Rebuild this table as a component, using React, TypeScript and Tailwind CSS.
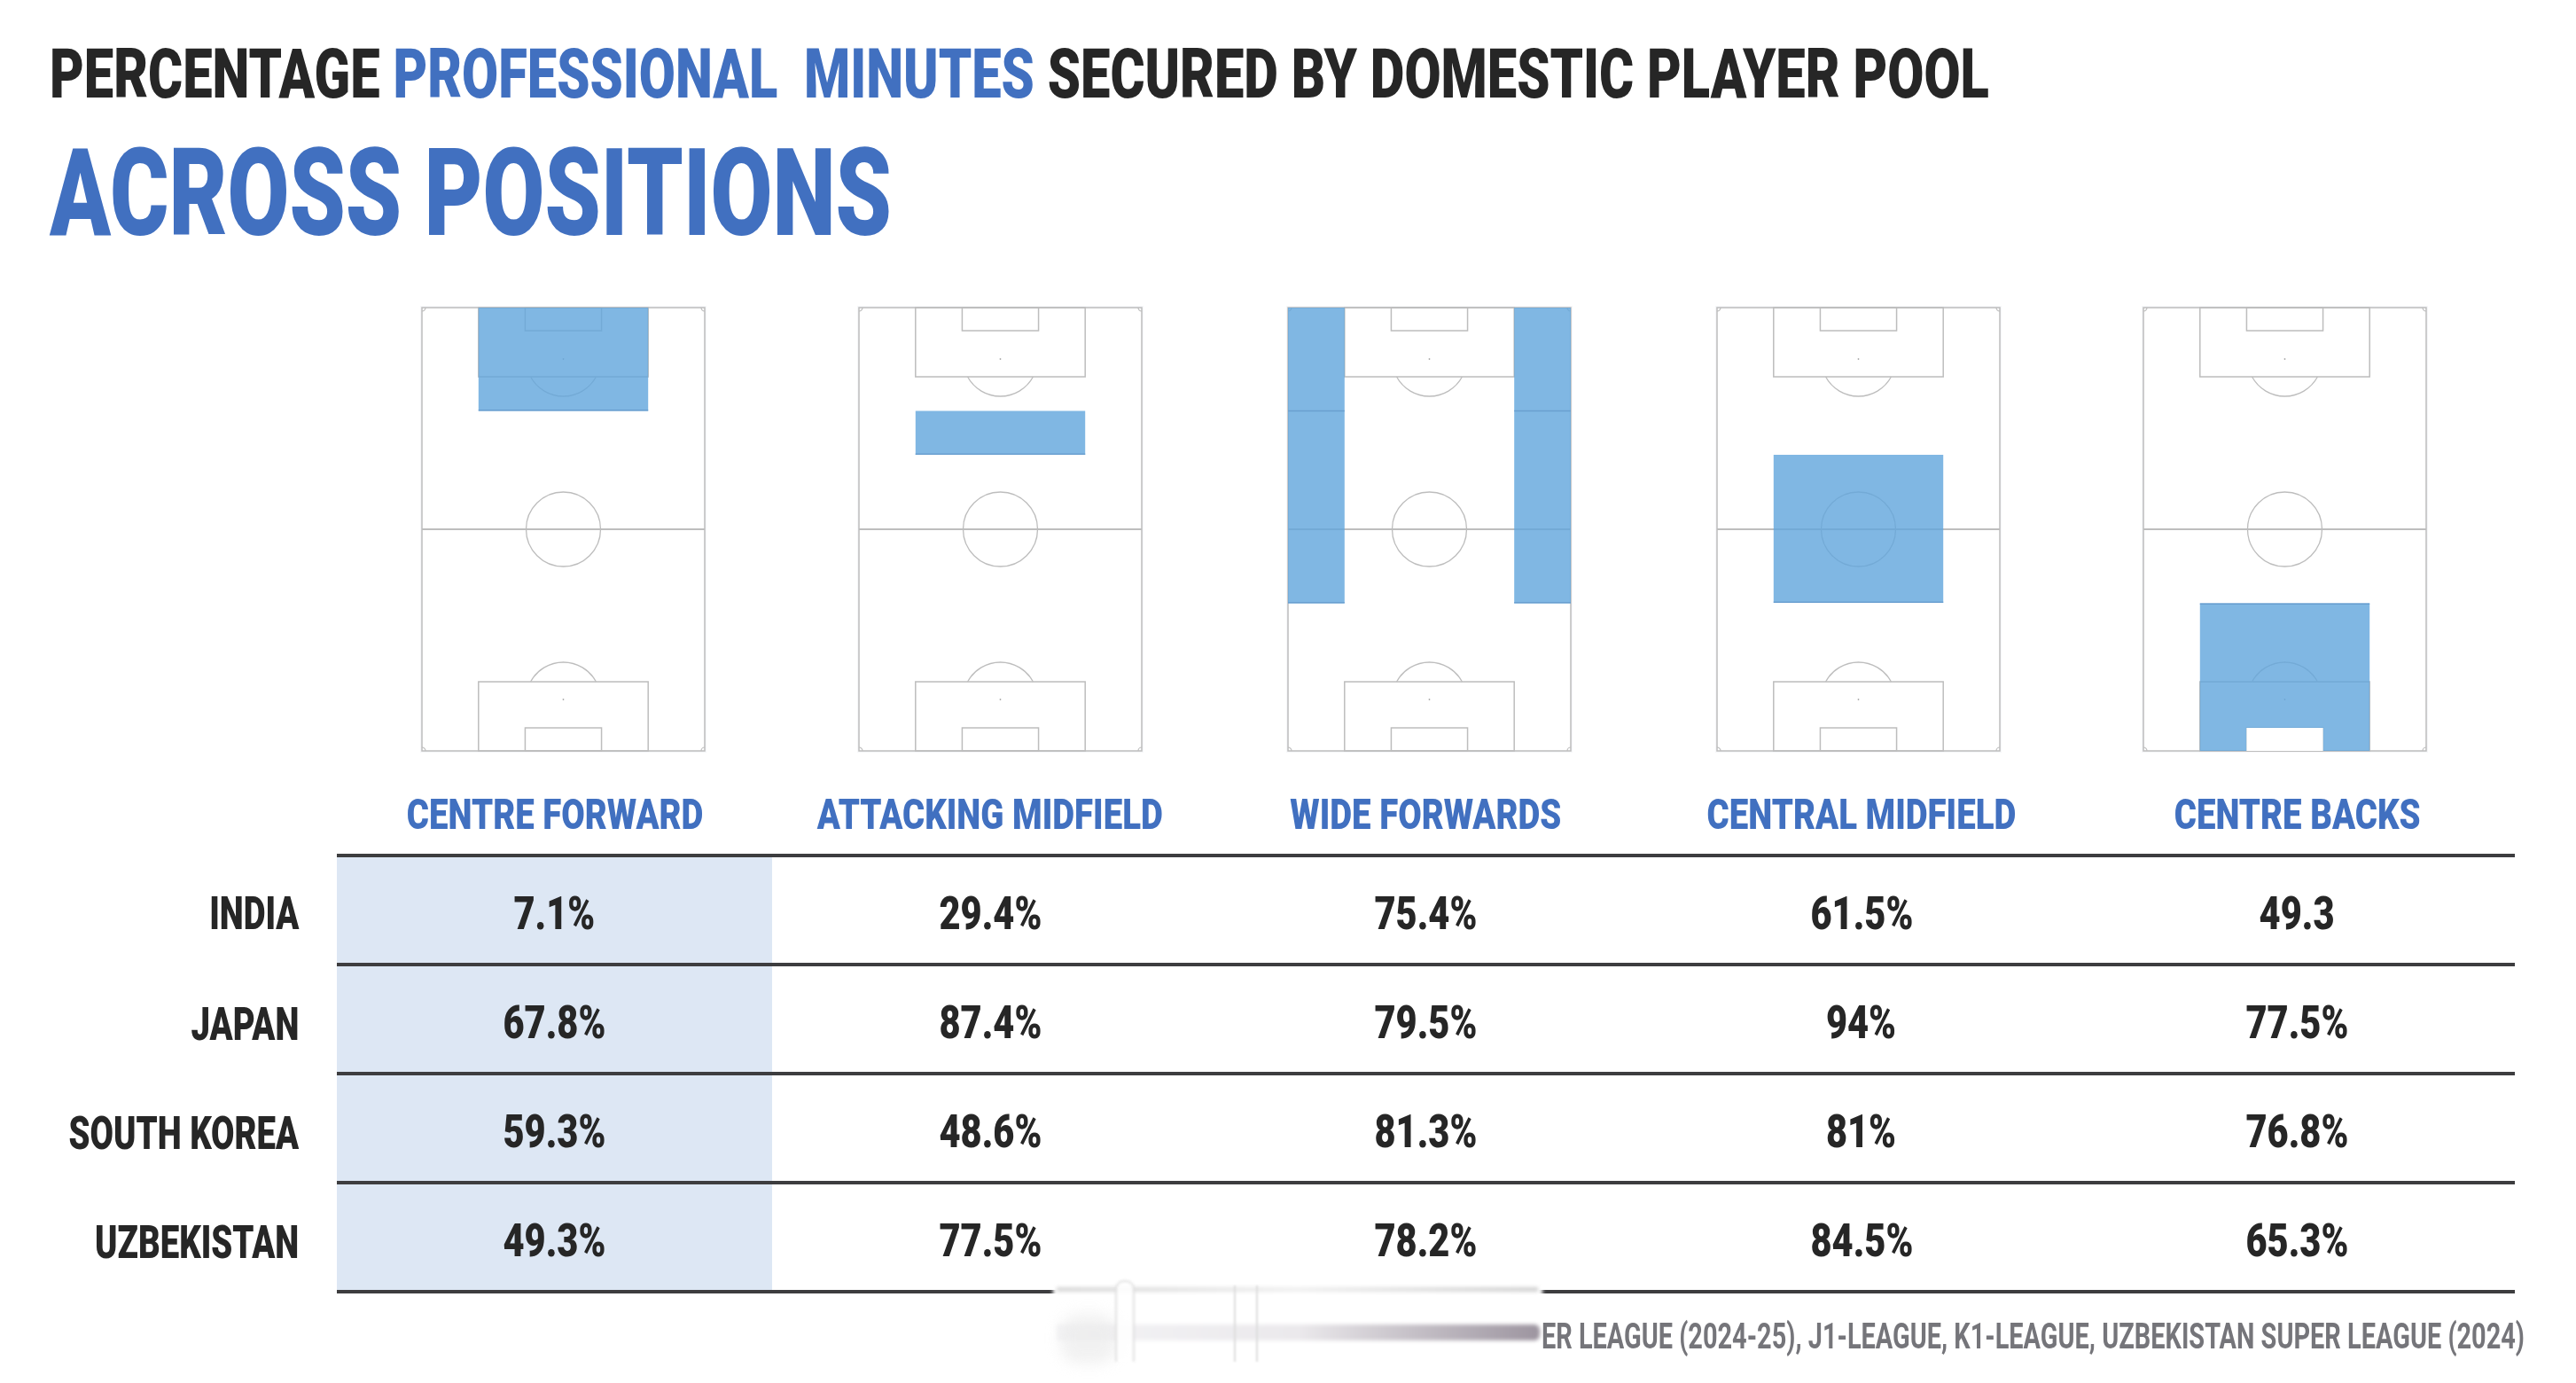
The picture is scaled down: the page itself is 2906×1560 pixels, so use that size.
import React from "react";

type Kind = "cf" | "am" | "wf" | "cm" | "cb";

const X0 = 2;
const Y0 = 2;
const W = 319;
const H = 500;
const LINE = "#bdbdbd";
const BLUE = "#60a5dc";

function Pitch({ kind }: { kind: Kind }) {
  const cx = X0 + W / 2;
  const paL = X0 + 0.2 * W;
  const paR = X0 + 0.8 * W;
  const gaL = X0 + 0.365 * W;
  const gaR = X0 + 0.635 * W;
  const paH = 78;
  const gaH = 26;
  const spot = 58;
  const r = 42;
  const dx = Math.sqrt(r * r - (paH - spot) * (paH - spot));
  const yb = Y0 + H;
  const y = (f: number) => Y0 + f * H;
  const blocks: { x: number; y: number; w: number; h: number }[] = [];
  if (kind === "cf") blocks.push({ x: paL, y: y(0), w: paR - paL, h: y(0.233) - y(0) });
  if (kind === "am") blocks.push({ x: paL, y: y(0.233), w: paR - paL, h: y(0.332) - y(0.233) });
  if (kind === "cm") blocks.push({ x: paL, y: y(0.332), w: paR - paL, h: y(0.666) - y(0.332) });
  if (kind === "wf") {
    blocks.push({ x: X0, y: y(0), w: 0.2 * W, h: y(0.667) - y(0) });
    blocks.push({ x: paR, y: y(0), w: 0.2 * W, h: y(0.667) - y(0) });
  }
  return (
    <svg width={323} height={504} viewBox="0 0 323 504" className="block shrink-0">
      <rect x={0} y={0} width={323} height={504} fill="#f6f7f9" />
      <rect x={X0} y={Y0} width={W} height={H} fill="#ffffff" stroke={LINE} strokeWidth={1.5} />
      <line x1={X0} y1={Y0 + H / 2} x2={X0 + W} y2={Y0 + H / 2} stroke={LINE} strokeWidth={2} />
      <circle cx={cx} cy={Y0 + H / 2} r={r} fill="none" stroke={LINE} strokeWidth={1.3} />
      <rect x={paL} y={Y0} width={paR - paL} height={paH} fill="none" stroke={LINE} strokeWidth={1.5} />
      <rect x={gaL} y={Y0} width={gaR - gaL} height={gaH} fill="none" stroke={LINE} strokeWidth={1.5} />
      <circle cx={cx} cy={Y0 + spot} r={0.9} fill="#aaaaaa" />
      <path
        d={`M ${cx - dx} ${Y0 + paH} A ${r} ${r} 0 0 0 ${cx + dx} ${Y0 + paH}`}
        fill="none"
        stroke={LINE}
        strokeWidth={1.3}
      />
      <rect x={paL} y={yb - paH} width={paR - paL} height={paH} fill="none" stroke={LINE} strokeWidth={1.5} />
      <rect x={gaL} y={yb - gaH} width={gaR - gaL} height={gaH} fill="none" stroke={LINE} strokeWidth={1.5} />
      <circle cx={cx} cy={yb - spot} r={0.9} fill="#aaaaaa" />
      <path
        d={`M ${cx - dx} ${yb - paH} A ${r} ${r} 0 0 1 ${cx + dx} ${yb - paH}`}
        fill="none"
        stroke={LINE}
        strokeWidth={1.3}
      />
      <path d={`M ${X0 + 4} ${Y0} A 4 4 0 0 1 ${X0} ${Y0 + 4}`} fill="none" stroke={LINE} strokeWidth={1.2} />
      <path d={`M ${X0 + W - 4} ${Y0} A 4 4 0 0 0 ${X0 + W} ${Y0 + 4}`} fill="none" stroke={LINE} strokeWidth={1.2} />
      <path d={`M ${X0} ${yb - 4} A 4 4 0 0 1 ${X0 + 4} ${yb}`} fill="none" stroke={LINE} strokeWidth={1.2} />
      <path d={`M ${X0 + W} ${yb - 4} A 4 4 0 0 0 ${X0 + W - 4} ${yb}`} fill="none" stroke={LINE} strokeWidth={1.2} />

      {blocks.map((b, i) => (
        <g key={i}>
          <rect x={b.x} y={b.y} width={b.w} height={b.h} fill={BLUE} fillOpacity={0.8} />
          <line x1={b.x} y1={b.y + b.h - 0.8} x2={b.x + b.w} y2={b.y + b.h - 0.8} stroke="#6a9fd0" strokeWidth={1.6} />
        </g>
      ))}
      {kind === "wf" && (
        <>
          <line x1={X0} y1={y(0.233)} x2={X0 + 0.2 * W} y2={y(0.233)} stroke="#6a9fd0" strokeWidth={1.6} />
          <line x1={paR} y1={y(0.233)} x2={X0 + W} y2={y(0.233)} stroke="#6a9fd0" strokeWidth={1.6} />
        </>
      )}
      {kind === "cb" && (
        <>
          <path
            d={`M ${paL} ${y(0.667)} H ${paR} V ${yb} H ${gaR} V ${yb - gaH} H ${gaL} V ${yb} H ${paL} Z`}
            fill={BLUE}
            fillOpacity={0.8}
          />
          <rect x={gaL} y={yb - gaH} width={gaR - gaL} height={gaH} fill="#ffffff" />
          <line x1={paL} y1={y(0.667) + 0.8} x2={paR} y2={y(0.667) + 0.8} stroke="#6a9fd0" strokeWidth={1.6} />
        </>
      )}
    </svg>
  );
}

const positions: { label: string; kind: Kind; gap: string }[] = [
  { label: "CENTRE FORWARD", kind: "cf", gap: "ml-[474px]" },
  { label: "ATTACKING MIDFIELD", kind: "am", gap: "ml-[170px]" },
  { label: "WIDE FORWARDS", kind: "wf", gap: "ml-[161px]" },
  { label: "CENTRAL MIDFIELD", kind: "cm", gap: "ml-[161px]" },
  { label: "CENTRE BACKS", kind: "cb", gap: "ml-[158px]" },
];

const rows: { country: string; values: string[] }[] = [
  { country: "INDIA", values: ["7.1%", "29.4%", "75.4%", "61.5%", "49.3"] },
  { country: "JAPAN", values: ["67.8%", "87.4%", "79.5%", "94%", "77.5%"] },
  { country: "SOUTH KOREA", values: ["59.3%", "48.6%", "81.3%", "81%", "76.8%"] },
  { country: "UZBEKISTAN", values: ["49.3%", "77.5%", "78.2%", "84.5%", "65.3%"] },
];

export default function App() {
  return (
    <div className="relative w-[2906px] h-[1560px] overflow-hidden bg-white text-[#262626] font-['Roboto','Liberation_Sans',sans-serif]">
      {/* Title */}
      <div className="pl-[56px] pt-[46px]">
        <div className="text-[77px] leading-none font-black whitespace-pre">
          <span className="inline-block origin-left scale-x-[0.774]">
            PERCENTAGE <span className="text-[#4170c0]">PROFESSIONAL  MINUTES</span> SECURED BY DOMESTIC PLAYER POOL
          </span>
        </div>
        <div className="mt-[26px] text-[138px] leading-none font-black text-[#4170c0] whitespace-pre">
          <span className="inline-block origin-left scale-x-[0.734]">ACROSS POSITIONS</span>
        </div>
      </div>

      {/* Pitches */}
      <div className="mt-[58px] flex">
        {positions.map((p) => (
          <div key={p.kind} className={p.gap}>
            <Pitch kind={p.kind} />
          </div>
        ))}
      </div>

      {/* Column headers */}
      <div className="ml-[380px] mt-[46px] grid w-[2457px] grid-cols-5">
        {positions.map((p) => (
          <div key={p.kind} className="flex justify-center text-[48px] leading-none font-black text-[#4170c0] whitespace-pre">
            <span className="inline-block origin-center scale-x-[0.8]">{p.label}</span>
          </div>
        ))}
      </div>

      {/* Table */}
      <div className="mt-[20px]">
        {rows.map((row, ri) => (
          <div key={row.country} className="flex">
            <div className="flex w-[380px] items-center justify-end pr-[43px] pt-[8px] text-[52px] leading-none font-black whitespace-pre">
              <span className="inline-block origin-right scale-x-[0.737]">{row.country}</span>
            </div>
            <div
              className={
                ri === 0
                  ? "grid h-[127px] w-[2457px] grid-cols-5 border-y-4 border-[#3d3d3f]"
                  : "grid h-[123px] w-[2457px] grid-cols-5 border-b-4 border-[#3d3d3f]"
              }
            >
              {row.values.map((v, ci) => (
                <div
                  key={ci}
                  className={
                    ci === 0
                      ? "flex items-center justify-center bg-[#dde7f4] pt-[8px] text-[52px] leading-none font-black"
                      : "flex items-center justify-center pt-[8px] text-[52px] leading-none font-black"
                  }
                >
                  <span className="inline-block origin-center scale-x-[0.8]">{v}</span>
                </div>
              ))}
            </div>
          </div>
        ))}
      </div>

      {/* Footer source */}
      <div className="mt-[29px] flex w-[2848px] justify-end text-[40px] leading-none font-bold text-[#75757a] whitespace-pre">
        <span className="inline-block origin-right scale-x-[0.723]">
          ER LEAGUE (2024-25), J1-LEAGUE, K1-LEAGUE, UZBEKISTAN SUPER LEAGUE (2024)
        </span>
      </div>

      {/* Blurred smear over the source line */}
      <div className="pointer-events-none absolute left-[1188px] top-[1447px] h-[18px] w-[552px] bg-white blur-[2px]" />
      <div className="pointer-events-none absolute left-[1192px] top-[1452px] h-[5px] w-[543px] bg-gradient-to-r from-[#d6d6d6] via-[#efefef] to-[#cfcfcf] blur-[2px]" />
      <div className="pointer-events-none absolute left-[1185px] top-[1480px] h-[60px] w-[555px] bg-white" />
      <div className="pointer-events-none absolute left-[1192px] top-[1494px] h-[18px] w-[545px] rounded-r-[6px] bg-gradient-to-r from-[#f4f4f6] via-[#ebe9ec] to-[#9d95a0] blur-[2px]" />
      <div className="pointer-events-none absolute left-[1196px] top-[1482px] h-[56px] w-[64px] rounded-[20px] bg-[#ececec] opacity-70 blur-[8px]" />
      <div className="pointer-events-none absolute left-[1258px] top-[1444px] h-[92px] w-[22px] rounded-t-[10px] border-x-2 border-t-2 border-[#dcdcdc] bg-white opacity-90 blur-[1.5px]" />
      <div className="pointer-events-none absolute left-[1392px] top-[1450px] h-[86px] w-[2px] bg-[#dedede] blur-[1px]" />
      <div className="pointer-events-none absolute left-[1417px] top-[1450px] h-[86px] w-[2px] bg-[#dedede] blur-[1px]" />
    </div>
  );
}
